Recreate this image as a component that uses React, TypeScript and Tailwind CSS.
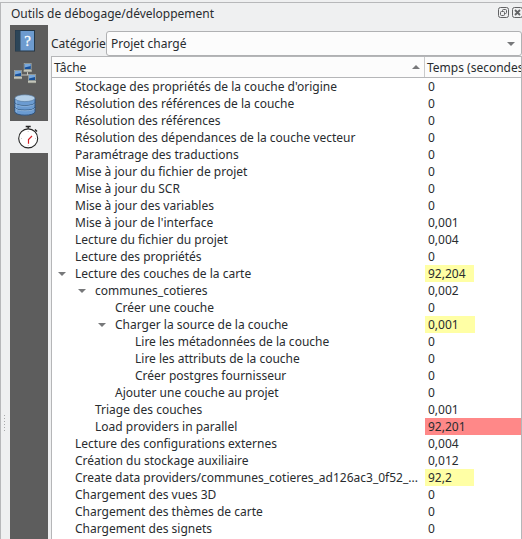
type Task = {
  label: string;
  time: string;
  level?: number;
  open?: boolean;
  bar?: string;
};

const tasks: Task[] = [
  { label: "Stockage des propriétés de la couche d'origine", time: "0" },
  { label: "Résolution des références de la couche", time: "0" },
  { label: "Résolution des références", time: "0" },
  { label: "Résolution des dépendances de la couche vecteur", time: "0" },
  { label: "Paramétrage des traductions", time: "0" },
  { label: "Mise à jour du fichier de projet", time: "0" },
  { label: "Mise à jour du SCR", time: "0" },
  { label: "Mise à jour des variables", time: "0" },
  { label: "Mise à jour de l'interface", time: "0,001" },
  { label: "Lecture du fichier du projet", time: "0,004" },
  { label: "Lecture des propriétés", time: "0" },
  { label: "Lecture des couches de la carte", time: "92,204", open: true, bar: "w-[49px] bg-[#ffffa5]" },
  { label: "communes_cotieres", time: "0,002", level: 1, open: true },
  { label: "Créer une couche", time: "0", level: 2 },
  { label: "Charger la source de la couche", time: "0,001", level: 2, open: true, bar: "w-[50px] bg-[#ffffa5]" },
  { label: "Lire les métadonnées de la couche", time: "0", level: 3 },
  { label: "Lire les attributs de la couche", time: "0", level: 3 },
  { label: "Créer postgres fournisseur", time: "0", level: 3 },
  { label: "Ajouter une couche au projet", time: "0", level: 2 },
  { label: "Triage des couches", time: "0,001", level: 1 },
  { label: "Load providers in parallel", time: "92,201", level: 1, bar: "w-full bg-[#ff8888]" },
  { label: "Lecture des configurations externes", time: "0,004" },
  { label: "Création du stockage auxiliaire", time: "0,012" },
  { label: "Create data providers/communes_cotieres_ad126ac3_0f52_...", time: "92,2", bar: "w-[49px] bg-[#ffffa5]" },
  { label: "Chargement des vues 3D", time: "0" },
  { label: "Chargement des thèmes de carte", time: "0" },
  { label: "Chargement des signets", time: "0" },
];

const indents = ["pl-[4px]", "pl-[24px]", "pl-[44px]", "pl-[64px]"];

function Arrow({ up = false }: { up?: boolean }) {
  return (
    <svg viewBox="0 0 8 4" className={up ? "h-1 w-2 rotate-180" : "h-1 w-2"}>
      <path d="M0 0h8L4 4z" fill="#77787a" />
    </svg>
  );
}

function BookIcon() {
  return (
    <svg viewBox="0 0 22 24" className="h-6 w-[22px]">
      <rect x=".5" y="1.5" width="19" height="20.5" fill="#6d9bcf" stroke="#253746" />
      <rect x=".5" y="1.5" width="5" height="20.5" fill="#2c4558" />
      <text x="12.5" y="16.5" textAnchor="middle" fontSize="15" fontFamily="Liberation Serif, serif" fill="#fff" stroke="#fff" strokeWidth=".3">?</text>
    </svg>
  );
}

function Computer({ x, y }: { x: number; y: number }) {
  return (
    <g transform={`translate(${x} ${y})`}>
      <rect x=".5" y=".5" width="7" height="6" fill="#17509a" stroke="#a4a79f" strokeWidth=".8" />
      <path d="M1 1h6v2L1 4.5z" fill="#79a8dc" />
      <path d="M0 7h8v2H0z" fill="#c4c5ba" />
      <path d="M0 8.8h8" stroke="#85877f" strokeWidth=".6" />
    </g>
  );
}

function NetworkIcon() {
  return (
    <svg viewBox="0 0 24 22" className="h-[22px] w-6">
      <path d="M14.5 9v4M8 13h11" fill="none" stroke="#c7c8c2" />
      <Computer x={10.7} y={1} />
      <Computer x={1} y={8} />
      <Computer x={15} y={12} />
    </svg>
  );
}

function DatabaseIcon() {
  return (
    <svg viewBox="0 0 22 22" className="h-[22px] w-[22px]">
      <path d="M.8 4.3v13.4c0 4.6 20.2 4.6 20.2 0V4.3" fill="#6b9bd1" stroke="#2c4f78" strokeWidth=".9" />
      <path d="M2.2 6v12" stroke="#91b8df" />
      <path d="M.8 8.6c0 4 20.2 4 20.2 0M.8 13.2c0 4 20.2 4 20.2 0" fill="none" stroke="#23486f" strokeWidth=".9" />
      <path d="M1.2 9.6c1 3.4 18.6 3.4 19.4 0M1.2 14.2c1 3.4 18.6 3.4 19.4 0" fill="none" stroke="#a6c6e7" strokeWidth=".7" />
      <ellipse cx="10.9" cy="4.2" rx="10" ry="3.4" fill="#b4cfe8" stroke="#55799e" strokeWidth=".6" />
    </svg>
  );
}

function StopwatchIcon() {
  return (
    <svg viewBox="0 0 22 24" className="h-6 w-[22px]">
      <circle cx="10.2" cy="13.4" r="9.5" fill="#fff" stroke="#252525" strokeWidth="1.1" />
      <path d="M7.7 1.5h5M10.2 1.5v2M17 4.5l2 2" fill="none" stroke="#252525" strokeWidth="1.4" />
      <path d="M10.2 6v1M10.2 20v1M3 13.5h1M17 13.5h1" stroke="#aaa" strokeWidth=".6" />
      <path d="M10.5 18.8v-4.3L14 11" fill="none" stroke="#d52027" strokeWidth="1.2" />
    </svg>
  );
}

function WindowButtons() {
  return (
    <svg viewBox="0 0 24 12" className="h-3 w-6 shrink-0">
      <g fill="none" stroke="#626365">
        <rect x=".5" y=".5" width="10" height="10" rx="2" />
        <rect x="4.5" y="2.5" width="4" height="4" rx="1" />
        <rect x="2.5" y="4.5" width="4" height="4" rx="1" fill="#eff0f1" />
        <rect x="14.5" y=".5" width="10" height="10" rx="2" />
        <path d="m17 3 5 5m0-5-5 5" strokeWidth="1.8" />
      </g>
    </svg>
  );
}

function TaskRow({ label, time, level = 0, open, bar }: Task) {
  return (
    <div className="flex h-[17px] shrink-0 whitespace-pre">
      <div className={`flex w-[373px] shrink-0 items-center ${indents[level]}`}>
        <span className="flex w-[19px] shrink-0 pl-[2px]">{open && <Arrow />}</span>
        <span className="leading-[17px]">{label}</span>
      </div>
      <div className="min-w-0 flex-1">
        <div className={`h-[17px] pl-[3px] leading-[17px] ${bar ?? ""}`}>{time}</div>
      </div>
    </div>
  );
}

export default function App() {
  return (
    <div className="flex h-[539px] w-[522px] flex-col overflow-hidden bg-[#eff0f1] pt-[2px] font-['Noto_Sans',sans-serif] text-[12px] text-[#292c2f] antialiased">
      <div className="flex min-h-0 flex-1 flex-col border-t border-l border-[#b7b8ba]">
        <header className="flex h-[22px] shrink-0 items-center justify-between pl-[10px]">
          <h1 className="leading-[18px] tracking-[-0.01px]">Outils de débogage/développement</h1>
          <div className="pb-[2px]"><WindowButtons /></div>
        </header>
        <div className="flex min-h-0 flex-1">
          <div className="flex w-[9px] shrink-0 flex-col gap-[2px] pt-[390px] pl-[3px]">
            {[0, 1, 2, 3, 4, 5].map((dot) => (
              <i key={dot} className="size-px shrink-0 bg-[#a8a9ab]" />
            ))}
          </div>
          <nav className="flex w-[38px] shrink-0 flex-col bg-[#5d5d5d]">
            <div className="flex h-8 items-center pl-[5px]"><BookIcon /></div>
            <div className="flex h-8 items-center pl-[3px]"><NetworkIcon /></div>
            <div className="flex h-8 items-center pl-[4px]"><DatabaseIcon /></div>
            <div className="flex h-8 items-center bg-[#eff0f1] pl-[8px]"><StopwatchIcon /></div>
          </nav>
          <main className="flex min-w-0 flex-1 flex-col pl-[3px] pt-[6px]">
            <div className="flex h-[25px] shrink-0 items-center">
              <label className="w-[55px] shrink-0">Catégorie</label>
              <div className="flex h-[25px] flex-1 items-center justify-between rounded-[3px] border border-[#b0b1b3] bg-[#fcfcfc] pr-[6px] pl-[4px]">
                <span>Projet chargé</span>
                <Arrow />
              </div>
            </div>
            <section className="flex min-h-0 flex-1 flex-col border-x border-t border-[#b5b6b8] bg-white">
              <div className="flex h-[21px] shrink-0 border-b border-[#b5b6b8] bg-[#fcfcfc]">
                <div className="flex w-[373px] shrink-0 items-center justify-between border-r border-[#c9cacb] pr-[4px] pl-[2px]">
                  <span className="pt-px">Tâche</span>
                  <Arrow up />
                </div>
                <div className="min-w-0 flex-1 overflow-hidden pl-[2px] leading-[22px] whitespace-nowrap">Temps (secondes</div>
              </div>
              <div className="flex min-h-0 flex-1 flex-col overflow-hidden">
                {tasks.map((task) => <TaskRow key={task.label} {...task} />)}
              </div>
            </section>
          </main>
        </div>
      </div>
    </div>
  );
}
